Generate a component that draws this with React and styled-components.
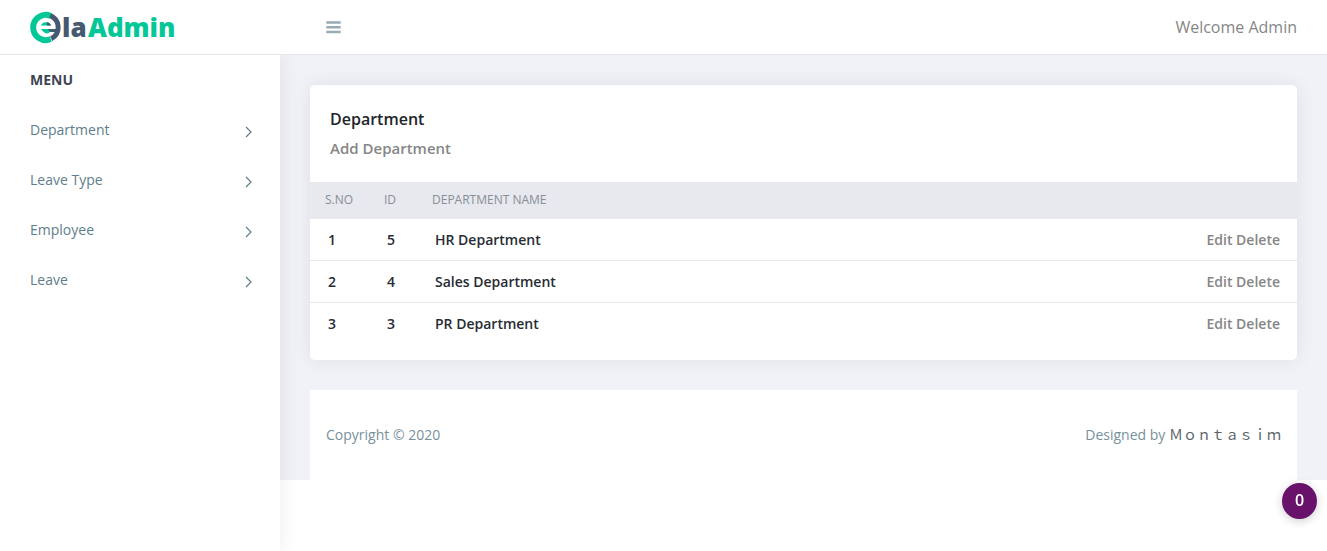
import React from "react";
import styled, { createGlobalStyle } from "styled-components";

const GlobalStyle = createGlobalStyle`
  *, *::before, *::after { box-sizing: border-box; }
  body {
    margin: 0;
    background: #fff;
    color: #212529;
    font-family: "Open Sans", "Noto Sans CJK JP", sans-serif;
    font-size: 16px;
    line-height: 24px;
  }
  a { color: inherit; text-decoration: none; }
  h1, h2, p, ul { margin: 0; padding: 0; }
`;

const Page = styled.div`
  display: flex;
  flex-direction: column;
  min-height: 100vh;
`;

const Header = styled.header`
  position: relative;
  z-index: 2;
  display: flex;
  align-items: center;
  height: 55px;
  padding-right: 30px;
  background: #fff;
  border-bottom: 1px solid #e5e5ea;
`;

const Brand = styled.a`
  flex: 0 0 325px;
  padding-left: 30px;
  svg { display: block; }
`;

const LogoText = styled.text`
  font-family: "Open Sans", sans-serif;
  font-size: 26px;
  font-weight: 800;
  fill: ${({ $green }) => ($green ? "#04c797" : "#455a70")};
`;

const Toggle = styled.button`
  display: flex;
  padding: 0;
  border: 0;
  background: none;
  color: #99abb4;
`;

const Welcome = styled.a`
  margin-left: auto;
  color: #868686;
`;

const Body = styled.div`
  display: flex;
  flex: 1;
`;

const Sidebar = styled.nav`
  position: relative;
  z-index: 1;
  flex: 0 0 280px;
  padding: 0 28px 0 30px;
  background: #fff;
  box-shadow: 0 0 20px rgba(0, 0, 0, 0.08);
  font-size: 14px;
`;

const MenuTitle = styled.h2`
  color: #3e4555;
  font-size: 14px;
  font-weight: 700;
  line-height: 50px;
`;

const MenuList = styled.ul`
  list-style: none;
`;

const MenuLink = styled.a`
  display: flex;
  align-items: center;
  justify-content: space-between;
  height: 50px;
  color: #607d8b;
  svg { margin-top: 4px; }
`;

const Main = styled.main`
  flex: 1;
  align-self: flex-start;
  display: flex;
  flex-direction: column;
  gap: 30px;
  padding: 30px 30px 0;
  background: #f1f2f7;
`;

const Card = styled.section`
  padding-bottom: 15px;
  border-radius: 5px;
  background: #fff;
  box-shadow: 0 0 20px rgba(0, 0, 0, 0.08);
`;

const CardHead = styled.div`
  padding: 22px 20px;
`;

const CardTitle = styled.h1`
  font-size: 16px;
  font-weight: 600;
  line-height: 24px;
`;

const AddLink = styled.a`
  display: inline-block;
  padding-top: 5px;
  color: #868686;
  font-size: 15px;
  font-weight: 600;
`;

const Table = styled.table`
  width: 100%;
  border-collapse: separate;
  border-spacing: 0;
  table-layout: fixed;
`;

const HeadCell = styled.th`
  width: ${({ $width }) => $width || "auto"};
  height: 37px;
  padding: 0 0 2px 15px;
  background: #e8e9ef;
  color: #868e96;
  font-size: 12px;
  font-weight: 400;
  text-align: left;
`;

const Cell = styled.td`
  height: 42px;
  padding: 0 17px 0 18px;
  color: ${({ $actions }) => ($actions ? "#868686" : "#272c33")};
  font-size: 14px;
  font-weight: 600;
  text-align: ${({ $actions }) => ($actions ? "right" : "left")};
  tr:not(:last-child) > & { border-bottom: 1px solid #e8e9ef; }
`;

const Footer = styled.footer`
  display: flex;
  align-items: center;
  justify-content: space-between;
  height: 90px;
  padding: 0 16px;
  background: #fff;
  color: #78909c;
  font-size: 14px;
`;

const Author = styled.a`
  color: #5a6268;
`;

const Counter = styled.button`
  position: fixed;
  right: 10px;
  bottom: 32px;
  z-index: 3;
  width: 35px;
  height: 36px;
  padding: 0 0 2px;
  border: 0;
  border-radius: 50%;
  background: #68126b;
  color: #fff;
  font-family: inherit;
  font-size: 16px;
  font-weight: 600;
  box-shadow: 0 2px 10px rgba(0, 0, 0, 0.2);
`;

const Logo = () => (
  <svg width="148" height="34" viewBox="0 0 148 34" role="img" aria-label="ElaAdmin">
    <path d="M20.7 5.9A12.6 12.6 0 1 0 20.7 29.1" fill="none" stroke="#04c797" strokeWidth="6" />
    <path d="M20.2 5.7A12.6 12.6 0 0 1 21.2 28.7" fill="none" stroke="#455a70" strokeWidth="5" />
    <path d="M11 15.5C12 11 20 11 21 15.5Z" fill="#04c797" />
    <path d="M17 12C19 12.5 20.5 13.5 21 15.5H17Z" fill="#455a70" />
    <path d="M11 19H28V22H20Q16 26 11 19Z" fill="#04c797" />
    <path d="M18 19H29V22H20Z" fill="#455a70" />
    <LogoText x="32" y="27">la</LogoText>
    <LogoText x="58" y="27" $green>Admin</LogoText>
  </svg>
);

const Bars = () => (
  <svg width="16" height="14" viewBox="0 0 16 14" aria-hidden="true">
    <path d="M1.3 2.4H15.7M1.3 7.2H15.7M1.3 12H15.7" stroke="currentColor" strokeWidth="2.5" />
  </svg>
);

const Chevron = () => (
  <svg width="7" height="12" viewBox="0 0 7 12" aria-hidden="true">
    <path d="M1 1L6 6L1 11" fill="none" stroke="currentColor" strokeWidth="1.2" />
  </svg>
);

const menu = ["Department", "Leave Type", "Employee", "Leave"];

const departments = [
  { id: 5, name: "HR Department" },
  { id: 4, name: "Sales Department" },
  { id: 3, name: "PR Department" },
];

export default function App() {
  return (
    <Page>
      <GlobalStyle />
      <Header>
        <Brand href="#"><Logo /></Brand>
        <Toggle type="button" aria-label="Toggle menu"><Bars /></Toggle>
        <Welcome href="#">Welcome Admin</Welcome>
      </Header>
      <Body>
        <Sidebar>
          <MenuTitle>MENU</MenuTitle>
          <MenuList>
            {menu.map((label) => (
              <li key={label}>
                <MenuLink href="#">{label}<Chevron /></MenuLink>
              </li>
            ))}
          </MenuList>
        </Sidebar>
        <Main>
          <Card>
            <CardHead>
              <CardTitle>Department</CardTitle>
              <AddLink href="#">Add Department</AddLink>
            </CardHead>
            <Table>
              <thead>
                <tr>
                  <HeadCell $width="59px">S.NO</HeadCell>
                  <HeadCell $width="48px">ID</HeadCell>
                  <HeadCell>DEPARTMENT NAME</HeadCell>
                  <HeadCell $width="140px" aria-label="Actions" />
                </tr>
              </thead>
              <tbody>
                {departments.map(({ id, name }, index) => (
                  <tr key={id}>
                    <Cell>{index + 1}</Cell>
                    <Cell>{id}</Cell>
                    <Cell>{name}</Cell>
                    <Cell $actions><a href="#">Edit</a> <a href="#">Delete</a></Cell>
                  </tr>
                ))}
              </tbody>
            </Table>
          </Card>
          <Footer>
            <p>Copyright © 2020</p>
            <p>Designed by <Author href="#">Ｍｏｎｔａｓｉｍ</Author></p>
          </Footer>
        </Main>
      </Body>
      <Counter type="button">0</Counter>
    </Page>
  );
}
